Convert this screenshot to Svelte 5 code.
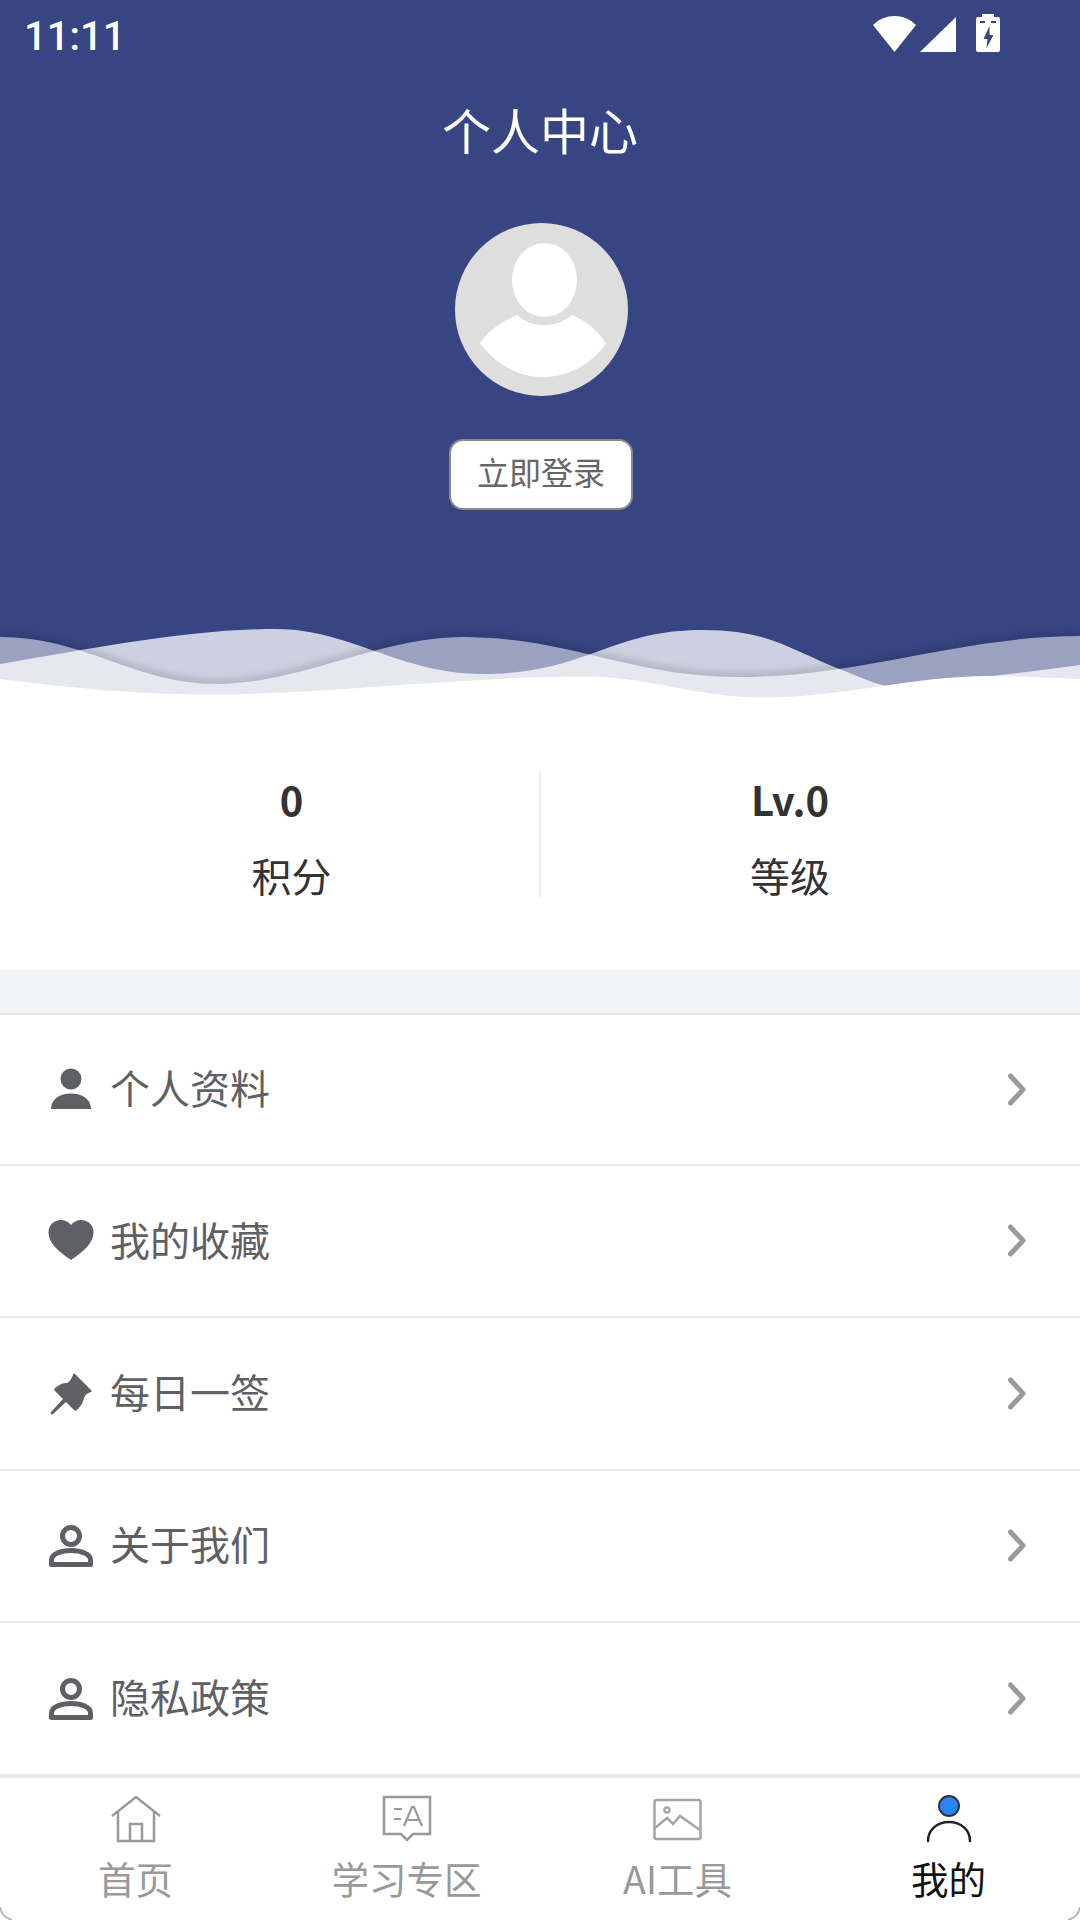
<script>
  const rows = [
    { t: '个人资料', i: 'user' },
    { t: '我的收藏', i: 'heart' },
    { t: '每日一签', i: 'pin' },
    { t: '关于我们', i: 'outline' },
    { t: '隐私政策', i: 'outline' }
  ];
  const c1 = 'M0 637C85 637 135 684 217 684C300 684 380 637 462 637C570 637 630 677 740 677C860 677 960 636 1080 636';
  const c2 = 'M0 664C95 648 190 629 276 629C350 629 400 674 483 674C585 674 610 630 702 630C770 630 790 650 842 670C860 677 875 684 890 687C960 680 1020 673 1080 665';
  const c3 = 'M0 679C70 688 140 694.500 207 694.500C330 694.500 450 676.600 592 676.600C650 678 700 697.600 764 697.600C840 697.600 915 676 988 676C1020 676 1055 678 1080 679';
</script>

<div class="page">
  <header class="hero">
    <div class="status">
      <span class="time">11:11</span>
      <div class="sys">
        <svg width="43" height="36" viewBox="0 0 43 36"><path d="M0 9C12 -3 31 -3 43 9L21.500 36Z" fill="#fff"/></svg>
        <svg class="sig" width="36" height="35" viewBox="0 0 36 35"><path d="M36 0V35H0Z" fill="#fff"/></svg>
        <svg class="bat" width="24" height="38" viewBox="0 0 24 38"><path fill="#fff" fill-rule="evenodd" d="M6 0h12v3h4a2 2 0 0 1 2 2v31a2 2 0 0 1-2 2H2a2 2 0 0 1-2-2V5a2 2 0 0 1 2-2h4ZM4 7h5v2H4ZM15 7h5v2h-5ZM13.500 12l-6 13h4l-1 9 7-13h-4Z"/></svg>
      </div>
    </div>
    <h1>个人中心</h1>
    <div class="avatar">
      <svg width="173" height="173" viewBox="0 0 173 173">
        <circle cx="86.500" cy="86.500" r="86.500" fill="#dedede"/>
        <ellipse cx="89.500" cy="57" rx="32.500" ry="37" fill="#fff"/>
        <path d="M25 120C33 108 46 99 62 92C70 99 79 102 89 102C99 102 108 99 117 92C131 98 144 108 151 121C134 143 112 154 88 154C64 154 41 142 25 120Z" fill="#fff"/>
      </svg>
    </div>
    <button class="login">立即登录</button>
    <svg class="waves" width="1080" height="120" viewBox="0 600 1080 120">
      <defs>
        <clipPath id="above"><path d="{c1}L1080 600L0 600Z"/></clipPath>
        <filter id="soft" x="-5%" y="-50%" width="110%" height="200%"><feGaussianBlur stdDeviation="4"/></filter>
      </defs>
      <path d="{c2}L1080 720L0 720Z" fill="#fff" fill-opacity=".75"/>
      <path d="{c1}L1080 720L0 720Z" fill="#fff" fill-opacity=".5"/>
      <g clip-path="url(#above)"><path d={c1} fill="none" stroke="#000" stroke-opacity=".25" stroke-width="5" filter="url(#soft)"/></g>
      <path d="{c3}L1080 720L0 720Z" fill="#fff"/>
    </svg>
  </header>

  <section class="stats">
    <div class="stat"><strong>0</strong><span>积分</span></div>
    <div class="stat"><strong>Lv.0</strong><span>等级</span></div>
  </section>
  <div class="band"></div>

  <ul class="menu">
    {#each rows as r}
      <li>
        <span class="ico">
          {#if r.i === 'user'}
            <svg width="46" height="44" viewBox="0 0 46 44"><circle cx="23" cy="11" r="10.500" fill="#5f6065"/><path d="M3 41C3 31 12 25.500 23 25.500C34 25.500 43 31 43 41Z" fill="#5f6065"/></svg>
          {:else if r.i === 'heart'}
            <svg width="46" height="44" viewBox="0 0 46 44"><path d="M23 41C9 31 0.500 24 0.500 13C0.500 6 6 1 13 1C17 1 21 3 23 6C25 3 29 1 33 1C40 1 45.500 6 45.500 13C45.500 24 37 31 23 41Z" fill="#5f6065"/></svg>
          {:else if r.i === 'pin'}
            <svg width="46" height="44" viewBox="0 0 46 44"><path d="M27 2L43 18C44 19 44 20 43 20C39 21 37 23 36 26C35 30 34 33 29 38C28 39 27 39 26 38L18 30L5 42C3 43 2 42 3 40L15 27L7 19C6 18 6 17 7 16C12 12 15 11 19 11C21 10 23 8 25 3C25 2 26 1 27 2Z" fill="#5f6065"/></svg>
          {:else}
            <svg width="46" height="44" viewBox="0 0 46 44" fill="none" stroke="#5f6065" stroke-width="5"><circle cx="23" cy="12" r="8.500"/><path d="M3.500 40.500V36C3.500 30 13 26.500 23 26.500C33 26.500 42.500 30 42.500 36V40.500Z" stroke-linejoin="round"/></svg>
          {/if}
        </span>
        <span class="label">{r.t}</span>
        <svg class="chev" width="22" height="38" viewBox="0 0 22 38" fill="none" stroke="#9a9a9c" stroke-width="5" stroke-linecap="round" stroke-linejoin="round"><path d="M4.500 5L17 18.500L4.500 32"/></svg>
      </li>
    {/each}
  </ul>

  <nav class="tabs">
    <div class="tab">
      <svg width="50" height="48" viewBox="0 0 50 48" fill="none" stroke="#999" stroke-width="2.500"><path d="M1 21L25 2L49 21"/><path d="M7 16V46H43V16"/><path d="M19 46V29H31V46"/></svg>
      <span>首页</span>
    </div>
    <div class="tab">
      <svg class="learn" width="50" height="48" viewBox="0 0 50 48" fill="none" stroke="#999" stroke-width="2.500"><path d="M2 2H48V39H31L25 45L19 39H2Z"/><path d="M12 14H20M12 24H19M22 31L30 12H32L40 31M25.500 25H36.500" stroke-width="2.200"/></svg>
      <span>学习专区</span>
    </div>
    <div class="tab">
      <svg class="pic" width="50" height="48" viewBox="0 0 50 48" fill="none" stroke="#a5a5a5" stroke-width="2.500"><rect x="1.500" y="5" width="46" height="39" rx="2"/><circle cx="14" cy="15" r="2.500"/><path d="M2 33L14 23L20 29L27 21L47 35"/></svg>
      <span>AI工具</span>
    </div>
    <div class="tab active">
      <svg class="me" width="50" height="48" viewBox="0 0 50 48" fill="none"><circle cx="25" cy="11" r="10" fill="#2b84f6" stroke="#2e3440" stroke-width="2"/><path d="M4 46C4 35 13 27 25 27C37 27 46 35 46 46" stroke="#222" stroke-width="2.500" stroke-linecap="round"/></svg>
      <span>我的</span>
    </div>
    <svg class="corner left" width="14" height="14" viewBox="0 0 14 14" fill="none"><path d="M0 1C1 7 5 12 12 14" stroke="#bdbdbd" stroke-width="2"/></svg>
    <svg class="corner right" width="14" height="14" viewBox="0 0 14 14" fill="none"><path d="M14 1C13 7 9 12 2 14" stroke="#bdbdbd" stroke-width="2"/></svg>
  </nav>
</div>

<style>
  :global(body) { margin: 0; background: #fff; }
  .page {
    width: 1080px; height: 1920px; overflow: hidden; display: flex; flex-direction: column;
    font-family: "Noto Sans CJK SC", "Noto Sans", sans-serif; background: #fff;
  }
  .hero {
    position: relative; height: 720px; flex: none; background: #374583;
    display: flex; flex-direction: column; align-items: center;
  }
  .status {
    width: 100%; height: 70px; box-sizing: border-box; padding: 0 80px 0 24px;
    display: flex; align-items: flex-start; justify-content: space-between;
  }
  .time { font: 500 40px/70px Roboto, sans-serif; color: #fff; padding-top: 2px; }
  .sys { display: flex; align-items: flex-end; gap: 4px; margin-top: 14px; height: 38px; }
  .sys svg { display: block; }
  .bat { margin-left: 16px; }
  h1 { margin: 23px 0 0; font-size: 49px; font-weight: 400; line-height: 72px; color: #fff; }
  .avatar { margin: 58px 0 0 2px; width: 173px; height: 173px; }
  .avatar svg { display: block; }
  .login {
    margin: 43px 0 0 2px; width: 184px; height: 71px; box-sizing: border-box; padding: 0 0 8px;
    background: #fff; border: 2px solid #8a8a8a; border-radius: 14px;
    font: 400 32px/1 "Noto Sans CJK SC", sans-serif; color: #666;
  }
  .waves { position: absolute; left: 0; top: 600px; display: block; }
  .stats { height: 250px; flex: none; display: grid; grid-template-columns: 541px 539px; align-items: start; }
  .stat {
    margin-top: 51px; height: 127px; box-sizing: border-box; display: flex; flex-direction: column; align-items: center;
    color: #333;
  }
  .stat:first-child { border-right: 2px solid #eeeeee; padding-left: 44px; }
  .stat:last-child { padding-right: 41px; }
  .stat strong { font: 700 40px/56px "Noto Sans CJK SC", sans-serif; color: #333; }
  .stat span { font-size: 40px; line-height: 60px; margin-top: 18px; }
  .band { height: 43px; flex: none; background: #f4f5f7; }
  .menu { list-style: none; margin: 0; padding: 0; flex: none; }
  .menu li {
    height: 152.400px; box-sizing: border-box; display: flex; align-items: center;
    padding: 0 52px 0 48px; border-bottom: 2px solid #e5e7ef;
  }
  .menu li:first-child { height: 153px; border-top: 2px solid #e5e7ef; }
  .menu li:last-child { height: 151px; border-bottom: 0; }
  .ico { width: 62px; height: 44px; flex: none; }
  .ico svg { display: block; }
  .label { flex: 1; font-size: 40px; line-height: 60px; color: #5f6065; padding-bottom: 5px; }
  .chev { flex: none; }
  .tabs {
    position: relative; flex: 1; min-height: 0; border-top: 4px solid #e5e7ef; display: grid;
    grid-template-columns: repeat(4, 271px); background: #fff;
  }
  .tab {
    display: flex; flex-direction: column; align-items: center; padding-top: 17px;
    color: #999; font-size: 37.500px; line-height: 54px;
  }
  .tab svg { display: block; flex: none; }
  .tab span { margin-top: 8px; }
  .tab.active { color: #111; }
  .corner { position: absolute; bottom: 0; }
  .corner.left { left: 0; }
  .corner.right { right: 0; }
</style>
